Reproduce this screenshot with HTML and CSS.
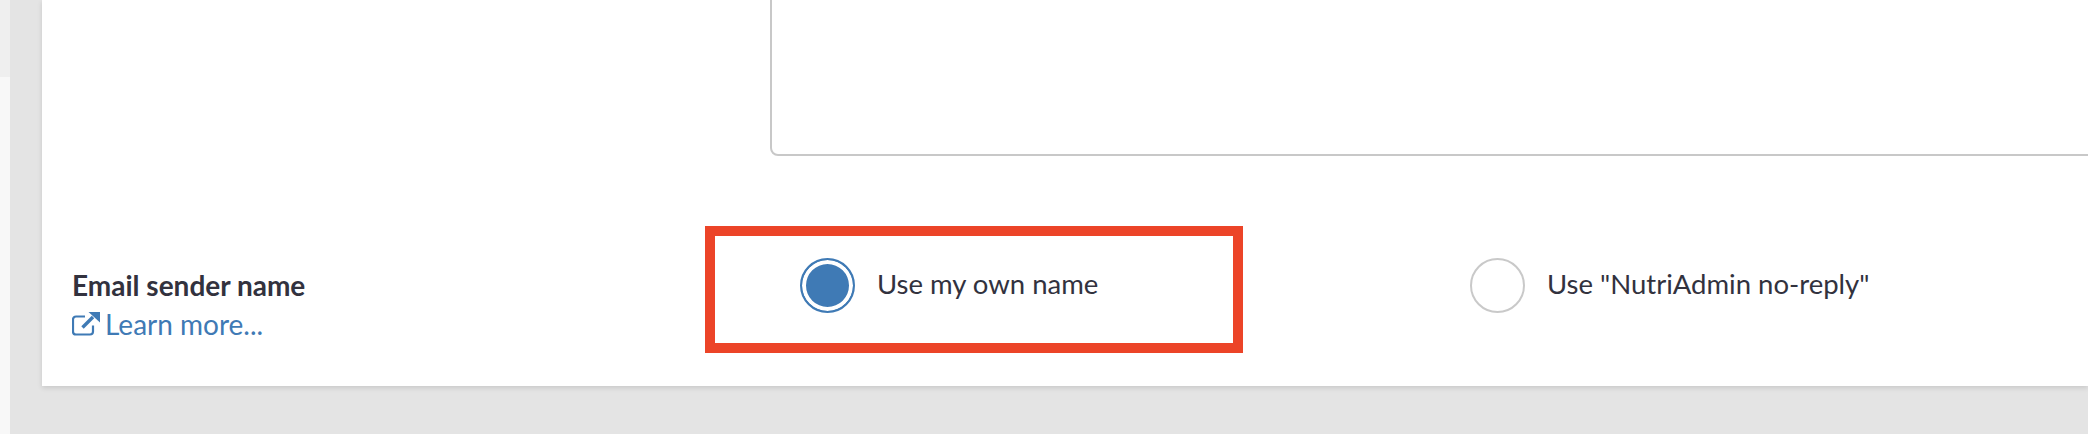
FILE: index.html
```html
<!DOCTYPE html>
<html lang="en">
<head>
    <meta charset="UTF-8">
    <meta name="viewport" content="width=device-width, initial-scale=1.0">
    <title>Email settings</title>
    <link rel="stylesheet" href="styles.css">
</head>
<body>
    <aside class="side-strip">
        <div class="side-top"></div>
        <div class="side-bottom"></div>
    </aside>

    <main class="content">
        <section class="card">
            <div class="message-row">
                <div class="message-box"></div>
            </div>

            <div class="sender-row">
                <div class="sender-label">
                    <strong>Email sender name</strong>
                    <a class="learn-more" href="#">
                        <svg class="learn-icon" viewBox="0 0 28 24" aria-hidden="true">
                            <path d="M21 13.5v6a3 3 0 0 1-3 3H4a3 3 0 0 1-3-3V7.5a3 3 0 0 1 3-3h9" fill="none" stroke="currentColor" stroke-width="2.2"/>
                            <path d="M10.5 15.5 21 5" fill="none" stroke="currentColor" stroke-width="3.4"/>
                            <path d="M16.5 0H28v10.5z" fill="currentColor"/>
                        </svg>
                        <span>Learn more...</span>
                    </a>
                </div>

                <div class="sender-options">
                    <label class="option">
                        <span class="radio checked"></span>
                        <span class="option-text">Use my own name</span>
                    </label>
                    <label class="option">
                        <span class="radio"></span>
                        <span class="option-text">Use "NutriAdmin no-reply"</span>
                    </label>
                </div>
            </div>

            <!-- annotation drawn over the screenshot -->
            <div class="highlight"></div>
        </section>
    </main>
</body>
</html>
```

FILE: styles.css
```css
body {
    margin: 0;
    height: 434px;
    display: flex;
    overflow: hidden;
    font-family: Lato, sans-serif;
    color: #32323e;
    background-color: #e3e3e3;
}

.side-strip {
    width: 10px;
    display: flex;
    flex-direction: column;
}

.side-top {
    height: 77px;
    background-color: #efefef;
}

.side-bottom {
    flex: 1;
    background-color: #f8f8f8;
}

.content {
    flex: 1;
    padding-left: 32px;
    background-color: #e4e4e4;
}

.card {
    position: relative;
    height: 386px;
    background-color: #fff;
    box-shadow: 0 2px 5px rgba(0, 0, 0, 0.12);
}

.message-row {
    height: 156px;
    padding-left: 728px;
    overflow: hidden;
}

.message-box {
    height: 166px;
    margin-top: -10px;
    margin-right: -10px;
    box-sizing: border-box;
    border: 2px solid #c8c8c8;
    border-radius: 8px;
}

.sender-row {
    display: grid;
    grid-template-columns: 728px 1fr;
    padding: 101px 0 0 30px;
}

.sender-label {
    padding-top: 12px;
}

.sender-label strong {
    display: block;
    font-size: 28px;
    line-height: 32px;
    font-weight: 700;
}

.learn-more {
    display: flex;
    align-items: center;
    gap: 5px;
    margin-top: 7px;
    font-size: 28px;
    line-height: 32px;
    color: #3f7ab5;
    text-decoration: none;
}

.learn-icon {
    width: 28px;
    height: 24px;
}

.sender-options {
    display: grid;
    grid-template-columns: 670px 1fr;
}

.option {
    display: flex;
    align-items: center;
    gap: 22px;
    height: 56px;
    font-size: 27.5px;
}

.option-text {
    margin-top: -3px;
}

.radio {
    flex-shrink: 0;
    width: 55px;
    height: 55px;
    box-sizing: border-box;
    border: 2px solid #c9c9c9;
    border-radius: 50%;
    background-color: #fff;
}

.radio.checked {
    border-color: #3f7ab5;
    background-color: #3f7ab5;
    box-shadow: inset 0 0 0 4px #fff;
}

.highlight {
    position: absolute;
    left: 663px;
    top: 226px;
    width: 538px;
    height: 127px;
    box-sizing: border-box;
    border: 10px solid #ec4428;
}
```
